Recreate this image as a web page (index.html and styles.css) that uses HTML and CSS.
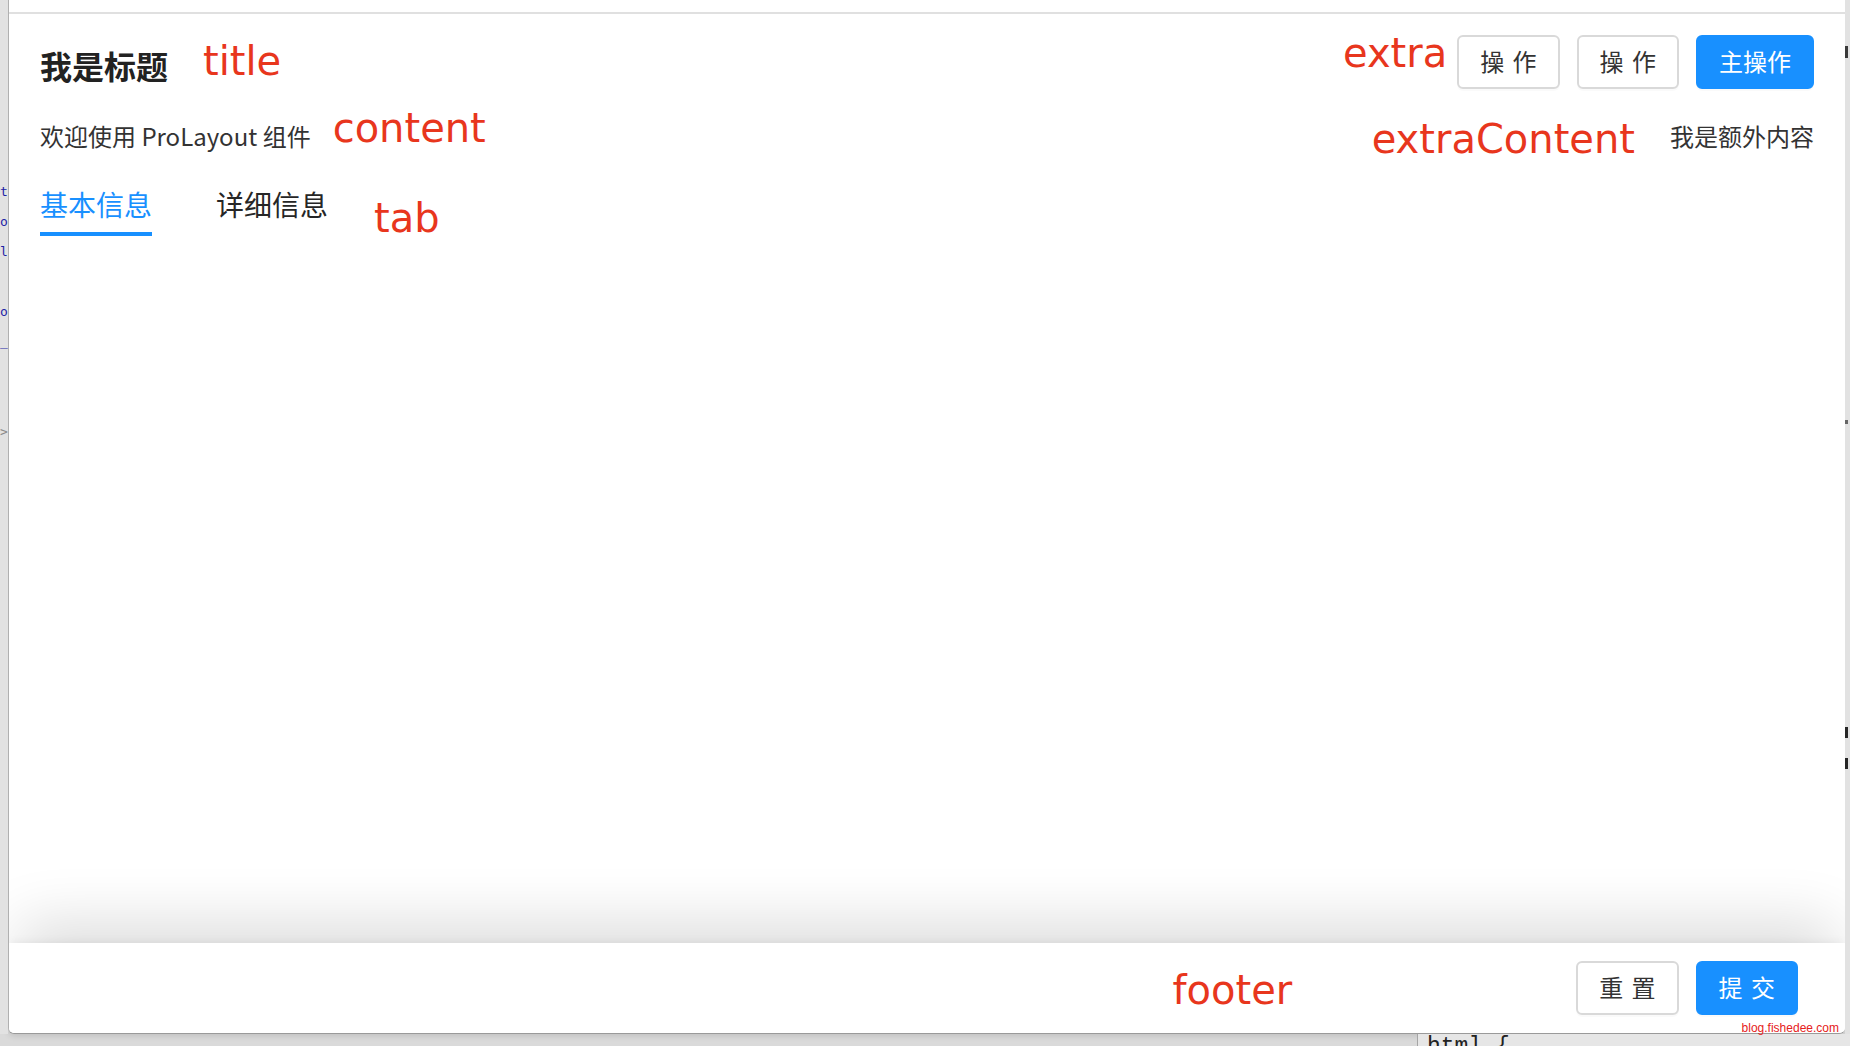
FILE: index.html
```html
<!DOCTYPE html>
<html lang="zh-CN">
<head>
    <meta charset="UTF-8">
    <meta name="viewport" content="width=device-width, initial-scale=1.0">
    <title>PageContainer</title>
    <link rel="stylesheet" href="styles.css">
</head>
<body>

<div class="screen">
    <div class="stage">
        <!-- bits of the window behind, at the left -->
        <div class="edge edge-left">
            <div class="behind-line">t</div>
            <div class="behind-line">o</div>
            <div class="behind-line">l</div>
            <div class="behind-line"></div>
            <div class="behind-line">o</div>
            <div class="behind-line">_</div>
            <div class="behind-line"></div>
            <div class="behind-line"></div>
            <div class="behind-line behind-gray">&gt;</div>
        </div>

        <div class="window">
            <div class="window-top"></div>

            <div class="page-header">
                <div class="heading">
                    <div class="heading-left">
                        <span class="heading-title">我是标题</span>
                        <span class="note note-title">title</span>
                    </div>
                    <div class="heading-extra">
                        <span class="note note-extra">extra</span>
                        <button class="btn">操 作</button>
                        <button class="btn">操 作</button>
                        <button class="btn btn-primary">主操作</button>
                    </div>
                </div>

                <div class="header-content">
                    <div class="content-main">
                        <span class="content-text">欢迎使用 ProLayout 组件</span>
                        <span class="note note-content">content</span>
                    </div>
                    <div class="content-extra">
                        <span class="note note-extra-content">extraContent</span>
                        <span class="extra-text">我是额外内容</span>
                    </div>
                </div>

                <div class="tabs">
                    <div class="tab tab-active">基本信息</div>
                    <div class="tab">详细信息</div>
                    <span class="note note-tab">tab</span>
                </div>
            </div>

            <div class="page-body"></div>

            <div class="footer-bar">
                <span class="note note-footer">footer</span>
                <button class="btn">重 置</button>
                <button class="btn btn-primary">提 交</button>
            </div>
        </div>

        <div class="edge edge-right">
            <span class="mark mark-bar"></span>
            <span class="mark mark-dot"></span>
            <span class="mark mark-tick"></span>
            <span class="mark mark-tick2"></span>
        </div>
    </div>

    <div class="desk-bottom">
        <div class="desk-spacer"></div>
        <div class="code-pane">html {</div>
    </div>

    <div class="watermark">blog.fishedee.com</div>
</div>

</body>
</html>
```

FILE: styles.css
```css
body {
    margin: 0;
    font-family: "Noto Sans CJK SC", sans-serif;
}
.screen {
    position: relative;
    width: 1850px;
    height: 1046px;
    overflow: hidden;
    background-color: #dadada;
}
.stage {
    display: flex;
    height: 1034px;
}

/* left and right strips: what is behind the window */
.edge {
    position: relative;
    background-color: #e2e2e2;
    overflow: hidden;
}
.edge-left {
    width: 8px;
    padding-top: 177px;
    box-sizing: border-box;
}
.behind-line {
    height: 30px;
    line-height: 30px;
    font-family: "DejaVu Sans Mono", monospace;
    font-size: 13px;
    color: #1f23a6;
}
.behind-gray {
    color: #8a8a8a;
}
.edge-right {
    width: 5px;
}
.mark {
    position: absolute;
    left: 0;
    background-color: #3a3a3a;
}
.mark-bar {
    top: 46px;
    width: 3px;
    height: 12px;
}
.mark-dot {
    top: 420px;
    width: 3px;
    height: 4px;
    background-color: #666;
}
.mark-tick,
.mark-tick2 {
    width: 3px;
    height: 11px;
    background-color: #262626;
}
.mark-tick {
    top: 727px;
}
.mark-tick2 {
    top: 758px;
}

/* the window */
.window {
    display: flex;
    flex-direction: column;
    width: 1837px;
    box-sizing: border-box;
    background-color: #fff;
    border-left: 1px solid #b0b0b0;
    border-bottom: 1px solid #9a9a9a;
    border-radius: 0 0 6px 6px;
    box-shadow: 0 2px 6px rgba(0, 0, 0, 0.12);
    overflow: hidden;
}
.window-top {
    height: 12px;
    border-bottom: 2px solid #e0e0e0;
}

.page-header {
    padding: 0 31px;
}
.heading {
    display: flex;
    justify-content: space-between;
    align-items: flex-start;
    height: 54px;
    margin-top: 21px;
}
.heading-left,
.heading-extra,
.content-main,
.content-extra {
    display: flex;
    align-items: flex-start;
}
.heading-title {
    margin-top: 14px;
    font-size: 32px;
    line-height: 32px;
    font-weight: 700;
    color: #222;
}

/* red annotations */
.note {
    font-family: "DejaVu Sans", sans-serif;
    font-size: 40px;
    line-height: 40px;
    color: #e8361d;
    white-space: nowrap;
}
.note-title {
    margin-top: 6px;
    margin-left: 35px;
}
.note-extra {
    margin-top: -2px;
    margin-right: 10px;
}
.note-content {
    margin-top: 19px;
    margin-left: 22px;
}
.note-extra-content {
    margin-top: 30px;
    margin-right: 35px;
}
.note-tab {
    margin-top: 39px;
    margin-left: 46px;
}
.note-footer {
    margin-top: 4px;
    margin-right: 284px;
}

.btn {
    height: 54px;
    padding: 0 21px 4px;
    font-family: "Noto Sans CJK SC", sans-serif;
    font-size: 24px;
    color: #333;
    word-spacing: 3px;
    background-color: #fff;
    border: 2px solid #d9d9d9;
    border-radius: 6px;
    box-shadow: 0 2px 0 rgba(0, 0, 0, 0.02);
}
.btn + .btn {
    margin-left: 17px;
}
.btn-primary {
    color: #fff;
    background-color: #1890ff;
    border-color: #1890ff;
}

.header-content {
    display: flex;
    justify-content: space-between;
    align-items: flex-start;
}
.content-text,
.extra-text {
    margin-top: 35px;
    font-size: 24px;
    line-height: 24px;
    color: #333;
    white-space: nowrap;
}

.tabs {
    display: flex;
    align-items: flex-start;
}
.tab {
    margin-top: 31px;
    padding-bottom: 14px;
    font-size: 28px;
    line-height: 28px;
    color: #262626;
    border-bottom: 4px solid transparent;
}
.tab + .tab {
    margin-left: 64px;
}
.tab-active {
    color: #1890ff;
    border-bottom-color: #1890ff;
}

.page-body {
    flex: 1;
}

.footer-bar {
    display: flex;
    justify-content: flex-end;
    align-items: center;
    height: 90px;
    padding-right: 47px;
    background-color: #fff;
    box-shadow: 0 -30px 60px -10px rgba(0, 0, 0, 0.14), 0 -4px 8px -2px rgba(0, 0, 0, 0.05);
}

/* strip under the window */
.desk-bottom {
    display: flex;
    height: 12px;
}
.desk-spacer {
    width: 1417px;
}
.code-pane {
    flex: 1;
    padding-top: 2px;
    padding-left: 9px;
    border-left: 1px solid #a5a5a5;
    background-color: #e6e6e6;
    font-family: "Liberation Mono", monospace;
    font-size: 23px;
    line-height: 23px;
    color: #222;
    white-space: pre;
}

.watermark {
    position: absolute;
    right: 11px;
    bottom: 12px;
    font-family: "Liberation Sans", sans-serif;
    font-size: 12px;
    line-height: 12px;
    color: #e62020;
}
```
